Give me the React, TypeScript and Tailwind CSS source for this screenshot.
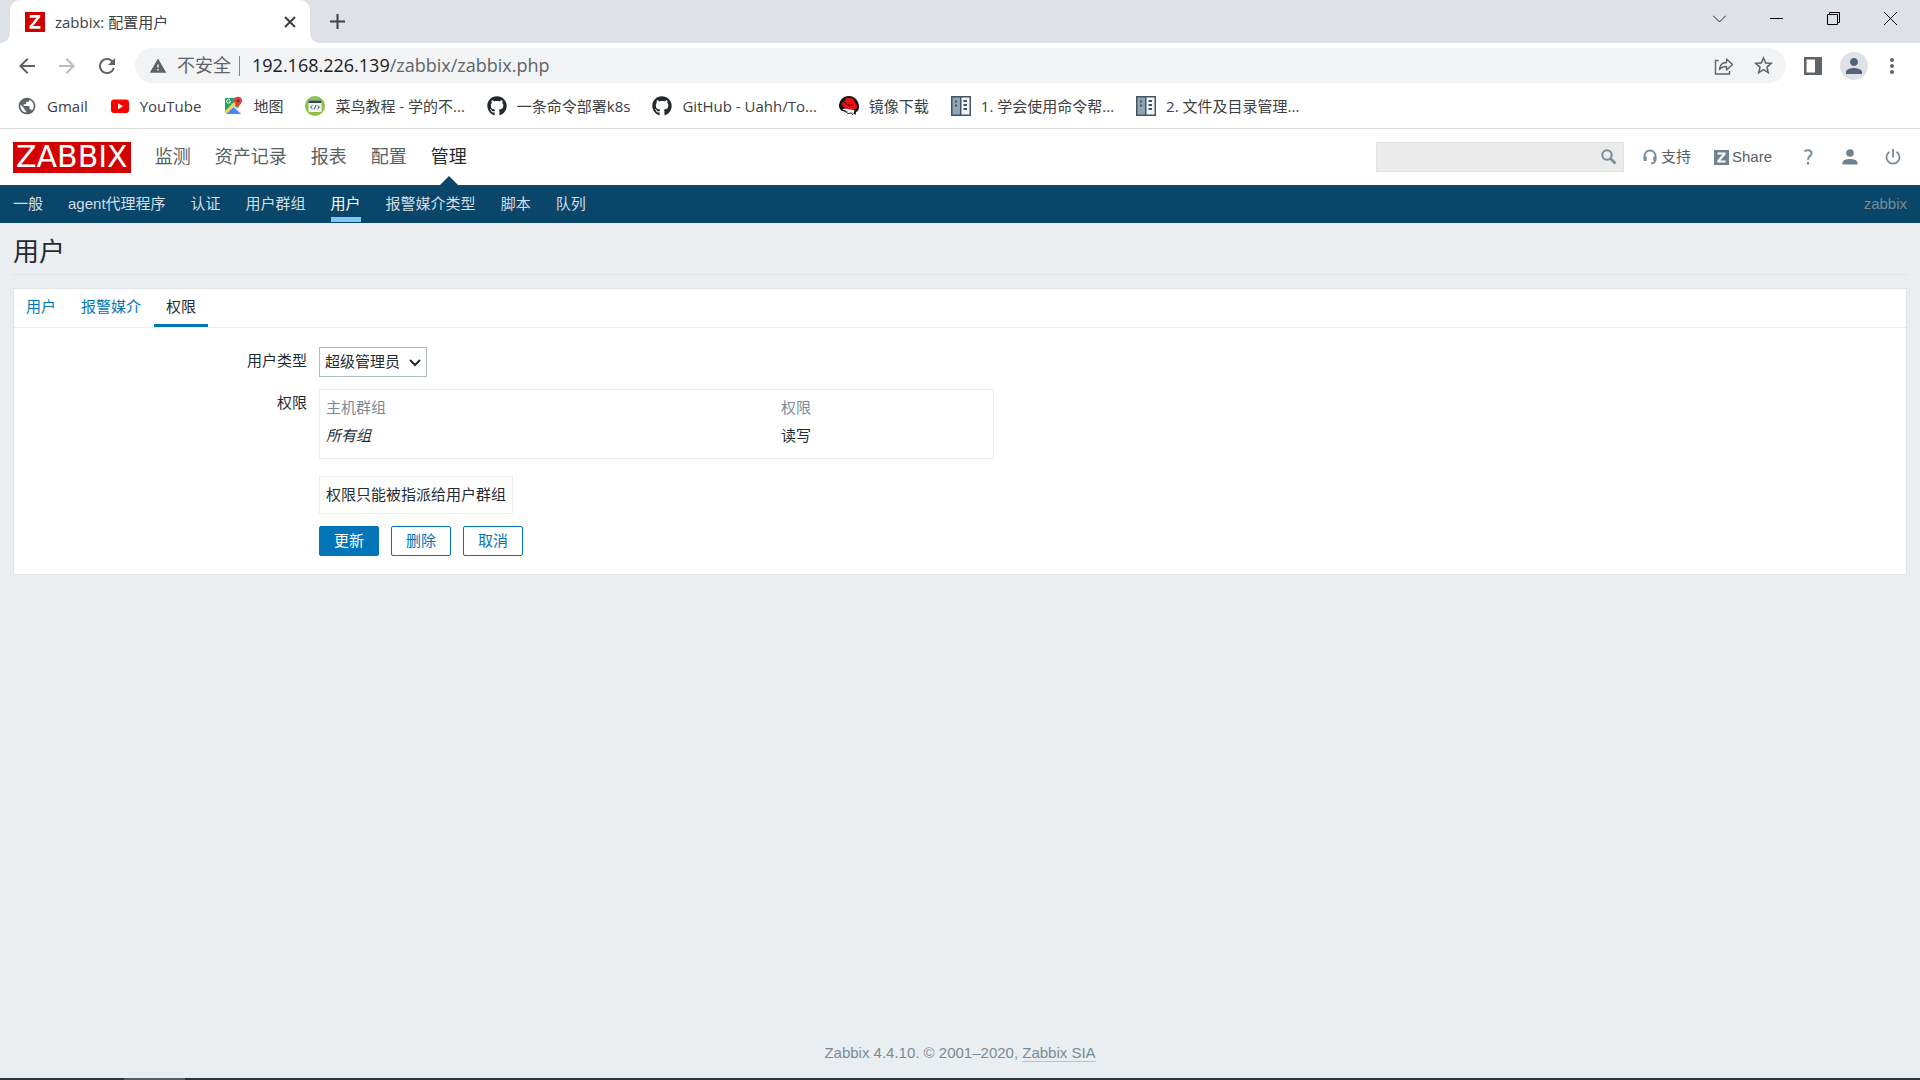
import { ReactNode, useState } from 'react';
import {
  MdArrowBack,
  MdArrowForward,
  MdMoreVert,
  MdPerson,
  MdPublic,
  MdRefresh,
  MdStarBorder,
  MdWarning,
} from 'react-icons/md';
import { FaGithub } from 'react-icons/fa';

interface Bookmark {
  label: string;
  icon: ReactNode;
}

const MAIN_MENU = ['监测', '资产记录', '报表', '配置', '管理'];
const SUB_MENU = ['一般', 'agent代理程序', '认证', '用户群组', '用户', '报警媒介类型', '脚本', '队列'];
const TABS = ['用户', '报警媒介', '权限'];
const USER_TYPES = ['Zabbix用户', 'Zabbix管理员', '超级管理员'];

function YouTubeIcon() {
  return (
    <svg viewBox="0 0 20 20" className="size-5">
      <rect x="1" y="3.5" width="18" height="13.5" rx="3" fill="#f00" />
      <path d="M8 7.3v6l5-3z" fill="#fff" />
    </svg>
  );
}

function MapsIcon() {
  return (
    <svg viewBox="0 0 20 20" className="size-5">
      <path d="M2 2h13v8L8 17H2z" fill="#1fa463" />
      <path d="M2 18 11 9l7 8v1z" fill="#e8e8e8" />
      <path d="M3 18 10.500 11 18 18z" fill="#4a89f3" />
      <path d="m1.500 15.500 10-10 2 2-10.500 10.500z" fill="#ffd04b" />
      <path d="M7.600 5.300H5.600M7 3.800A2 2 0 1 0 7.600 5.400" fill="none" stroke="#fff" strokeWidth="0.900" />
      <path d="M15 .8a4 4 0 0 1 4 4c0 3-3.500 4-4 8.500-.5-4.500-4-5.500-4-8.500a4 4 0 0 1 4-4z" fill="#e04335" />
      <circle cx="15" cy="4.800" r="1.500" fill="#8c2219" />
    </svg>
  );
}

function RunoobIcon() {
  return (
    <svg viewBox="0 0 20 20" className="size-5">
      <circle cx="10" cy="10" r="10" fill="#8bc34a" />
      <rect x="3.500" y="4.500" width="13" height="11.500" fill="#eef0f2" />
      <rect x="3.500" y="4.500" width="13" height="2.500" fill="#37474f" />
      <path d="m7.500 9.500-2 1.700 2 1.700M12.500 9.500l2 1.700-2 1.700M10.800 9l-1.500 4.500" fill="none" stroke="#455a64" />
    </svg>
  );
}

function RedHatIcon() {
  return (
    <svg viewBox="0 0 20 20" className="size-5">
      <path d="M0 11C0 4 4 0 10 0s10 5 10 11c0 3-1.500 4.500-3 5l-.5 3-2-1.500L13 16C9 15.500 5 16 2 14.500z" fill="#111" />
      <path d="M3 13.500C7 11.500 12 13 15.500 14.500l-1 3-1.500-1.500-2 1-3-2z" fill="#fff" />
      <path d="M5 14.500l4 3 3.500-.5 1.500 2" fill="none" stroke="#222" />
      <path d="M6.500 2.500c2-1.500 3.500-.3 5-.5 2.500-.3 4 2 4.500 5 3 1.500 3 6-1 6.500C9.500 14 3.500 12 2.500 8c0-1.500 1.200-2 2.800-1.800z" fill="#ee1010" />
      <path d="M5.500 6c.5 2.500 5.500 4 9 3" fill="none" stroke="#111" />
    </svg>
  );
}

function CabinetIcon() {
  return (
    <svg viewBox="0 0 20 20" className="size-5">
      <rect width="20" height="20" fill="#455560" />
      <rect x="1.500" y="1.500" width="7.500" height="17" fill="#8da5b5" />
      <rect x="10.500" y="1.500" width="8" height="17" fill="#f2f5f7" />
      <path d="M4 4.500h2v2H4zM4 8.500h2v2H4zM12.500 4h3.500v2h-3.500zM12.500 8h3.500v2h-3.500zM12.500 12h3.500v2h-3.500z" fill="#455560" />
    </svg>
  );
}

const BOOKMARKS: Bookmark[] = [
  { label: 'Gmail', icon: <MdPublic className="size-5 text-[#5f6368]" /> },
  { label: 'YouTube', icon: <YouTubeIcon /> },
  { label: '地图', icon: <MapsIcon /> },
  { label: '菜鸟教程 - 学的不...', icon: <RunoobIcon /> },
  { label: '一条命令部署k8s', icon: <FaGithub className="size-5 text-[#24292f]" /> },
  { label: 'GitHub - Uahh/To...', icon: <FaGithub className="size-5 text-[#24292f]" /> },
  { label: '镜像下载', icon: <RedHatIcon /> },
  { label: '1. 学会使用命令帮...', icon: <CabinetIcon /> },
  { label: '2. 文件及目录管理...', icon: <CabinetIcon /> },
];

function TabStrip() {
  return (
    <div className="flex h-[43px] items-end justify-between bg-[#dee1e6]">
      <div className="flex items-end">
        <svg viewBox="0 0 10 10" className="size-[10px]">
          <path d="M10 0v10H0A10 10 0 0 0 10 0z" fill="#fff" />
        </svg>
        <div className="flex h-[43px] w-[300px] items-center rounded-t-[10px] bg-white pl-[15px] pr-[13px]">
          <svg viewBox="0 0 20 20" className="size-5">
            <rect width="20" height="20" fill="#d40000" />
            <path d="M4.800 3h10.400v2.200L8 14h7.400v2.700H4.500v-2.400l7-8.600H4.800z" fill="#fff" />
          </svg>
          <span className="ml-[10px] flex-1 pt-px text-[15px] text-[#3c4043]">zabbix: 配置用户</span>
          <button aria-label="关闭标签页" className="p-px">
            <svg viewBox="0 0 12 12" className="size-3" stroke="#3c4043" strokeWidth="2">
              <path d="m1 1 10 10M11 1 1 11" />
            </svg>
          </button>
        </div>
        <svg viewBox="0 0 10 10" className="size-[10px]">
          <path d="M0 0v10h10A10 10 0 0 1 0 0z" fill="#fff" />
        </svg>
        <button aria-label="新标签页" className="flex h-[43px] items-center pl-[10px]">
          <svg viewBox="0 0 15 15" className="size-[15px]" stroke="#3c4043" strokeWidth="2">
            <path d="M7.500 0v15M0 7.500h15" />
          </svg>
        </button>
      </div>
      <div className="flex h-9 items-center gap-[44px] self-start pr-[23px]">
        <button aria-label="搜索标签页">
          <svg viewBox="0 0 13 13" className="size-[13px]" fill="none" stroke="#222">
            <path d="m0 3.500 6.500 6.500L13 3.500" />
          </svg>
        </button>
        <button aria-label="最小化">
          <svg viewBox="0 0 13 13" className="size-[13px]" stroke="#000">
            <path d="M0 6.500h13" />
          </svg>
        </button>
        <button aria-label="还原">
          <svg viewBox="0 0 13 13" className="size-[13px]" fill="none" stroke="#000">
            <path d="M.5 2.500h10v10H.5zM2.500 2.500v-2h10v10h-2" />
          </svg>
        </button>
        <button aria-label="关闭">
          <svg viewBox="0 0 13 13" className="size-[13px]" stroke="#000">
            <path d="m0 0 13 13M13 0 0 13" />
          </svg>
        </button>
      </div>
    </div>
  );
}

function Toolbar() {
  return (
    <div className="flex h-[45px] items-center bg-white pl-[15px] pr-4 text-[#5f6368]">
      <div className="flex items-center gap-4">
        <button aria-label="后退"><MdArrowBack className="size-6" /></button>
        <button aria-label="前进"><MdArrowForward className="size-6 text-[#babcbe]" /></button>
        <button aria-label="重新加载"><MdRefresh className="size-6" /></button>
      </div>
      <div className="ml-4 flex h-[35px] flex-1 items-center rounded-full bg-[#f1f3f4] pl-[14px] pr-[11px] text-[18px]">
        <MdWarning className="size-[18px]" />
        <span className="ml-[10px]">不安全</span>
        <span className="ml-2 h-5 w-px bg-[#80868b]" />
        <div className="ml-3 flex-1 whitespace-nowrap">
          <span className="text-[#202124]">192.168.226.139</span>/zabbix/zabbix.php
        </div>
        <button aria-label="分享此页">
          <svg viewBox="0 0 20 20" className="size-5" fill="none" stroke="#5f6368" strokeWidth="1.400">
            <path d="M4.500 4.500h-3V18h14v-3" />
            <path d="M5.500 13.500c.3-4.500 3-7 7-7V3l6 5.500-6 5.500v-3.500c-3 0-5.500 1-7 3z" strokeLinejoin="round" />
          </svg>
        </button>
        <button aria-label="为此标签页添加书签" className="ml-[18px]"><MdStarBorder className="size-[23px]" /></button>
      </div>
      <button aria-label="侧边栏" className="ml-[18px]">
        <svg viewBox="0 0 18 18" className="size-[18px]">
          <path d="M0 0h18v18H0zM2.500 2.500v13H11v-13z" fill="#5f6368" fillRule="evenodd" />
        </svg>
      </button>
      <button aria-label="个人资料" className="ml-[18px] flex size-7 items-center justify-center rounded-full bg-[#dee1e6]">
        <MdPerson className="size-6 text-[#546178]" />
      </button>
      <button aria-label="更多" className="ml-3"><MdMoreVert className="size-6" /></button>
    </div>
  );
}

function BookmarksBar() {
  return (
    <nav className="flex h-[41px] items-center gap-[22px] border-b border-[#dadce0] bg-white pb-1 pl-[17px]">
      {BOOKMARKS.map(b => (
        <a key={b.label} href="#" className="flex items-center gap-[10px] whitespace-nowrap text-[15px] leading-5 text-[#3c4043]">
          {b.icon}
          {b.label}
        </a>
      ))}
    </nav>
  );
}

function PageHeader() {
  return (
    <header>
      <div className="flex h-14 items-center justify-between bg-white px-[13px]">
        <div className="flex h-full items-center">
          <a href="#" className="flex h-[31px] items-center bg-[#d40000] px-[3px] font-['DejaVu_Sans',sans-serif] text-[30px] leading-none text-white">
            ZABBIX
          </a>
          <ul className="ml-6 flex h-full gap-6 text-[18px]">
            {MAIN_MENU.map(item => {
              const isActive = item === '管理';
              return (
                <li key={item} className="relative flex items-center">
                  <a href="#" className={isActive ? 'text-[#1f2c33]' : 'text-[#566063]'}>{item}</a>
                  {isActive && (
                    <svg viewBox="0 0 18 9" className="absolute bottom-0 left-1/2 h-[9px] w-[18px] -translate-x-1/2">
                      <path d="M9 0l9 9H0z" fill="#0a466a" />
                    </svg>
                  )}
                </li>
              );
            })}
          </ul>
        </div>
        <div className="flex items-center text-[15px] text-[#566063]">
          <form className="relative" onSubmit={e => e.preventDefault()}>
            <input type="text" aria-label="搜索" className="block h-[30px] w-[248px] border border-[#e3e3e3] bg-[#ebebeb] pl-2 pr-8 outline-none" />
            <button aria-label="搜索" className="absolute right-[7px] top-[7px]">
              <svg viewBox="0 0 16 16" className="size-4" fill="none" stroke="#768d99">
                <circle cx="6" cy="6" r="4.700" strokeWidth="2" />
                <path d="m9.500 9.500 5 5" strokeWidth="2.500" />
              </svg>
            </button>
          </form>
          <a href="#" className="ml-[18px] flex items-center gap-[3px]">
            <svg viewBox="0 0 16 16" className="size-4" fill="none" stroke="#768d99" strokeWidth="1.800">
              <path d="M2.500 10V7a5.500 5.500 0 0 1 11 0v3c0 3-1.500 4.500-4.500 4.500" />
              <path d="M3.200 7.500v4.500M12.800 7.500V12" strokeWidth="3" />
            </svg>
            支持
          </a>
          <a href="#" className="ml-[23px] flex items-center gap-[3px]">
            <svg viewBox="0 0 15 15" className="size-[15px]">
              <rect width="15" height="15" fill="#6e838e" />
              <path d="M3.500 2.500h8v2L6.200 10.400h5.400v2.100H3.300v-2l5.300-5.900H3.500z" fill="#fff" />
            </svg>
            Share
          </a>
          <a href="#" aria-label="帮助" className="ml-7">
            <svg viewBox="0 0 16 16" className="size-4" fill="none" stroke="#768d99" strokeWidth="2">
              <path d="M4.500 2.500C6 .800 11.500.500 11.500 4.200 11.500 7 8 6.800 8 10.800M8 13v2.500" />
            </svg>
          </a>
          <a href="#" aria-label="用户资料" className="ml-[26px]">
            <svg viewBox="0 0 16 16" className="size-4" fill="#6e838e">
              <circle cx="8" cy="4" r="3.800" />
              <path d="M.5 15.500v-2C1.500 10.500 5 10 8 10s6.500.5 7.500 3.500v2z" />
            </svg>
          </a>
          <a href="#" aria-label="退出" className="ml-[27px] mr-[6px]">
            <svg viewBox="0 0 16 16" className="size-4" fill="none" stroke="#768d99" strokeWidth="1.800">
              <path d="M8 0v8.500M4.500 2.700a6.500 6.500 0 1 0 7 0" />
            </svg>
          </a>
        </div>
      </div>
      <div className="flex h-[38px] justify-between bg-[#0a466a] px-[13px] text-[15px]">
        <ul className="flex gap-[25px]">
          {SUB_MENU.map(item => (
            <li key={item} className="flex pb-px">
              <a
                href="#"
                className={`flex items-center border-b-[5px] pt-[7px] ${
                  item === '用户' ? 'border-[#7dc6f5] text-white' : 'border-transparent text-[#d4dee4]'
                }`}
              >
                {item}
              </a>
            </li>
          ))}
        </ul>
        <span className="flex items-center text-[#768d99]">zabbix</span>
      </div>
    </header>
  );
}

function PermissionsForm() {
  const [userType, setUserType] = useState('超级管理员');

  return (
    <form className="grid grid-cols-[293px_1fr] gap-x-3 pb-[18px] pt-[19px] leading-5" onSubmit={e => e.preventDefault()}>
      <label htmlFor="user-type" className="pt-1 text-right">用户类型</label>
      <div className="relative w-[108px]">
        <select
          id="user-type"
          value={userType}
          onChange={e => setUserType(e.target.value)}
          className="block h-[30px] w-full appearance-none border border-[#acbbc2] bg-white pl-[5px] outline-none"
        >
          {USER_TYPES.map(t => <option key={t}>{t}</option>)}
        </select>
        <svg viewBox="0 0 12 8" className="pointer-events-none absolute right-[6px] top-3 h-2 w-3" fill="none" stroke="#1f2c33" strokeWidth="2">
          <path d="m1 1 5 5 5-5" />
        </svg>
      </div>

      <span className="pt-4 text-right">权限</span>
      <div className="mt-3 w-[675px] border border-[#ebeef0] px-[6px] pb-2 pt-1">
        <table className="w-full table-fixed text-left">
          <thead className="text-[#768d99]">
            <tr>
              <th className="w-[455px] py-1 font-normal">主机群组</th>
              <th className="py-1 font-normal">权限</th>
            </tr>
          </thead>
          <tbody>
            <tr>
              <td className="py-1"><em>所有组</em></td>
              <td className="py-1">读写</td>
            </tr>
          </tbody>
        </table>
      </div>

      <div className="col-start-2 mt-[17px] w-fit border border-[#ebeef0] px-[6px] py-2">
        权限只能被指派给用户群组
      </div>

      <div className="col-start-2 mt-3 flex gap-3">
        <button type="submit" className="h-[30px] w-[60px] rounded-xs border border-[#0275b8] bg-[#0275b8] text-white">更新</button>
        <button type="button" className="h-[30px] w-[60px] rounded-xs border border-[#0275b8] bg-white text-[#0275b8]">删除</button>
        <button type="button" className="h-[30px] w-[60px] rounded-xs border border-[#0275b8] bg-white text-[#0275b8]">取消</button>
      </div>
    </form>
  );
}

export default function App() {
  const [activeTab, setActiveTab] = useState('权限');

  return (
    <div className="flex min-h-screen flex-col bg-[#ebeef0]">
      <div className="font-['Open_Sans','Noto_Sans_CJK_SC',sans-serif]">
        <TabStrip />
        <Toolbar />
        <BookmarksBar />
      </div>

      <div className="flex flex-1 flex-col font-['Liberation_Sans','Noto_Sans_CJK_SC',sans-serif] text-[15px] text-[#1f2c33]">
        <PageHeader />
        <main className="flex-1 px-[13px]">
          <h1 className="border-b border-[#dfe4e7] pb-1 pt-[11px] text-[26px] leading-9">用户</h1>
          <section className="mt-[13px] border border-[#dfe4e7] bg-white">
            <div role="tablist" className="flex gap-px border-b border-[#ebeef0]">
              {TABS.map(tab => (
                <button
                  key={tab}
                  role="tab"
                  aria-selected={tab === activeTab}
                  onClick={() => setActiveTab(tab)}
                  className={`h-[38px] border-b-[3px] px-3 pt-[2px] ${
                    tab === activeTab ? 'border-[#0275b8] text-[#1f2c33]' : 'border-transparent text-[#0275b8]'
                  }`}
                >
                  {tab}
                </button>
              ))}
            </div>
            <PermissionsForm />
          </section>
        </main>
        <footer className="pb-4 text-center leading-[18px] text-[#768d99]">
          Zabbix 4.4.10. © 2001–2020, <a href="#" className="border-b border-[#b8c4ca]">Zabbix SIA</a>
        </footer>
      </div>

      {/* top edge of the desktop taskbar */}
      <div className="flex h-[2px] bg-[#333]">
        <span className="ml-[124px] w-[61px] bg-[#5c5c5c]" />
      </div>
    </div>
  );
}
